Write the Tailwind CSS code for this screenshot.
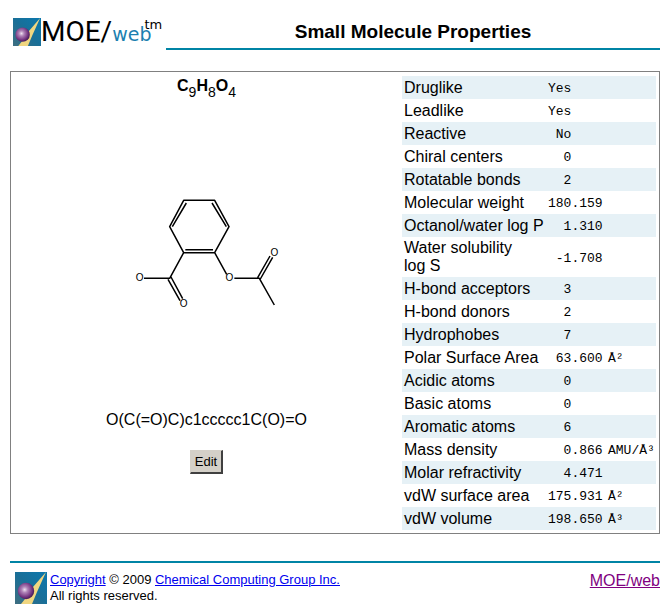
<!DOCTYPE html>
<html lang="en">
<head>
<meta charset="utf-8">
<title>Small Molecule Properties</title>
<script src="https://cdn.jsdelivr.net/npm/@tailwindcss/browser@4"></script>
</head>
<body class="bg-white px-[10px] font-['Liberation_Sans',Arial,sans-serif] text-base leading-[18px] text-black">
<svg class="absolute size-0" aria-hidden="true">
  <defs>
    <linearGradient id="sky" x1="1" y1="0" x2="0" y2="1"><stop offset="0" stop-color="#0b78ae"/><stop offset=".5" stop-color="#196f98"/><stop offset="1" stop-color="#3f6e80"/></linearGradient>
    <radialGradient id="ball" cx=".42" cy=".42" r=".6"><stop offset="0" stop-color="#eee2f0"/><stop offset=".3" stop-color="#b084b8"/><stop offset=".75" stop-color="#733480"/><stop offset="1" stop-color="#421b55"/></radialGradient>
    <symbol id="mark" viewBox="0 0 32 32">
      <rect width="32" height="32" fill="url(#sky)"/>
      <path d="M31 0 18 15 14 22 6 32H17L22 20Z" fill="#f0d680"/>
      <circle cx="11" cy="19" r="8.2" fill="url(#ball)"/>
    </symbol>
  </defs>
</svg>
<header class="flex items-start pt-[18px]">
  <div class="flex h-8 w-[156px] shrink-0 items-start pl-[3px]">
    <svg class="size-7 shrink-0" aria-hidden="true"><use href="#mark"/></svg>
    <div class="flex items-baseline whitespace-nowrap leading-7">
      <span class="font-['Roboto',sans-serif] text-[28px]">MOE/</span><span class="font-['DejaVu_Sans',sans-serif] text-[19px] text-[#1c7fb0]">web</span><span class="relative -top-3 -ml-[7px] font-['DejaVu_Sans',sans-serif] text-[13px]">tm</span>
    </div>
  </div>
  <h1 class="h-8 flex-1 border-b-2 border-[#0084a5] pt-[3px] text-center text-[19px] leading-[22px] font-bold">Small Molecule Properties</h1>
</header>

<main class="mt-[21px] flex border border-[#808080] pt-1 pr-[3px] pb-[3px]">
  <section class="flex min-w-0 flex-1 flex-col items-center">
    <h2 class="mt-px h-[25px] font-bold [&_sub]:-bottom-[6px] [&_sub]:text-[14px] [&_sub]:font-normal">C<sub>9</sub>H<sub>8</sub>O<sub>4</sub></h2>
    <svg class="size-[300px]" viewBox="-189 -249 900 900" role="img" aria-label="Molecule structure" fill="none" stroke="#000" stroke-width="4.5" stroke-linejoin="round">
      <path d="M191 46H284L327 125 284 203H191L149 125ZM199 54 157 125M276 54 319 125M196 194H279M191 203 149 280H72M284 203 320 268M343 280H418L463 360M144 283 180 347M153 276 188 341M413 278 450 213M421 282 458 217"/>
      <g fill="#000" stroke="none" font-family="Liberation Sans, sans-serif" font-size="30" text-anchor="middle">
        <text x="59" y="289">O</text><text x="191" y="366">O</text><text x="328" y="289">O</text><text x="463" y="213">O</text>
      </g>
    </svg>
    <p class="mt-[9px]">O(C(=O)C)c1ccccc1C(O)=O</p>
    <button type="button" class="mt-[21px] h-6 border border-t-[#d4d0c8] border-r-2 border-b-2 border-l-[#d4d0c8] border-r-[#404040] border-b-[#404040] bg-[#d4d0c8] px-1 text-[13px] leading-5">Edit</button>
  </section>
  <table class="w-[254px] shrink-0 table-fixed border-collapse [&_td]:p-0 [&_td]:pt-[3px] [&_td]:pl-0.5 [&_td]:font-['Liberation_Mono',monospace] [&_td]:text-[13px] [&_td]:whitespace-pre [&_th]:px-0.5 [&_th]:py-0.5 [&_th]:text-left [&_th]:font-normal [&_th]:whitespace-nowrap [&_tr]:h-[23px] [&_tr]:odd:bg-[#e6f1f6]">
    <colgroup><col class="w-36"><col class="w-[60px]"><col></colgroup>
    <tbody>
      <tr><th scope="row">Druglike</th><td>Yes</td><td></td></tr>
      <tr><th scope="row">Leadlike</th><td>Yes</td><td></td></tr>
      <tr><th scope="row">Reactive</th><td> No</td><td></td></tr>
      <tr><th scope="row">Chiral centers</th><td>  0</td><td></td></tr>
      <tr><th scope="row">Rotatable bonds</th><td>  2</td><td></td></tr>
      <tr><th scope="row">Molecular weight</th><td>180.159</td><td></td></tr>
      <tr><th scope="row">Octanol/water log P</th><td>  1.310</td><td></td></tr>
      <tr><th scope="row">Water solubility<br>log S</th><td> -1.708</td><td></td></tr>
      <tr><th scope="row">H-bond acceptors</th><td>  3</td><td></td></tr>
      <tr><th scope="row">H-bond donors</th><td>  2</td><td></td></tr>
      <tr><th scope="row">Hydrophobes</th><td>  7</td><td></td></tr>
      <tr><th scope="row">Polar Surface Area</th><td> 63.600</td><td>Å²</td></tr>
      <tr><th scope="row">Acidic atoms</th><td>  0</td><td></td></tr>
      <tr><th scope="row">Basic atoms</th><td>  0</td><td></td></tr>
      <tr><th scope="row">Aromatic atoms</th><td>  6</td><td></td></tr>
      <tr><th scope="row">Mass density</th><td>  0.866</td><td>AMU/Å³</td></tr>
      <tr><th scope="row">Molar refractivity</th><td>  4.471</td><td></td></tr>
      <tr><th scope="row">vdW surface area</th><td>175.931</td><td>Å²</td></tr>
      <tr><th scope="row">vdW volume</th><td>198.650</td><td>Å³</td></tr>
    </tbody>
  </table>
</main>

<footer class="mt-[27px] flex items-start border-t-2 border-[#0084a5] pt-[9px] pl-[5px]">
  <svg class="size-8 shrink-0" aria-hidden="true"><use href="#mark"/></svg>
  <p class="ml-[3px] flex-1 text-[13px] leading-4"><a href="#copyright" class="text-[#0000ee] underline">Copyright</a> © 2009 <a href="#ccg" class="text-[#0000ee] underline">Chemical Computing Group Inc.</a><br>All rights reserved.</p>
  <a href="#moe" class="text-[#800080] underline">MOE/web</a>
</footer>
</body>
</html>
